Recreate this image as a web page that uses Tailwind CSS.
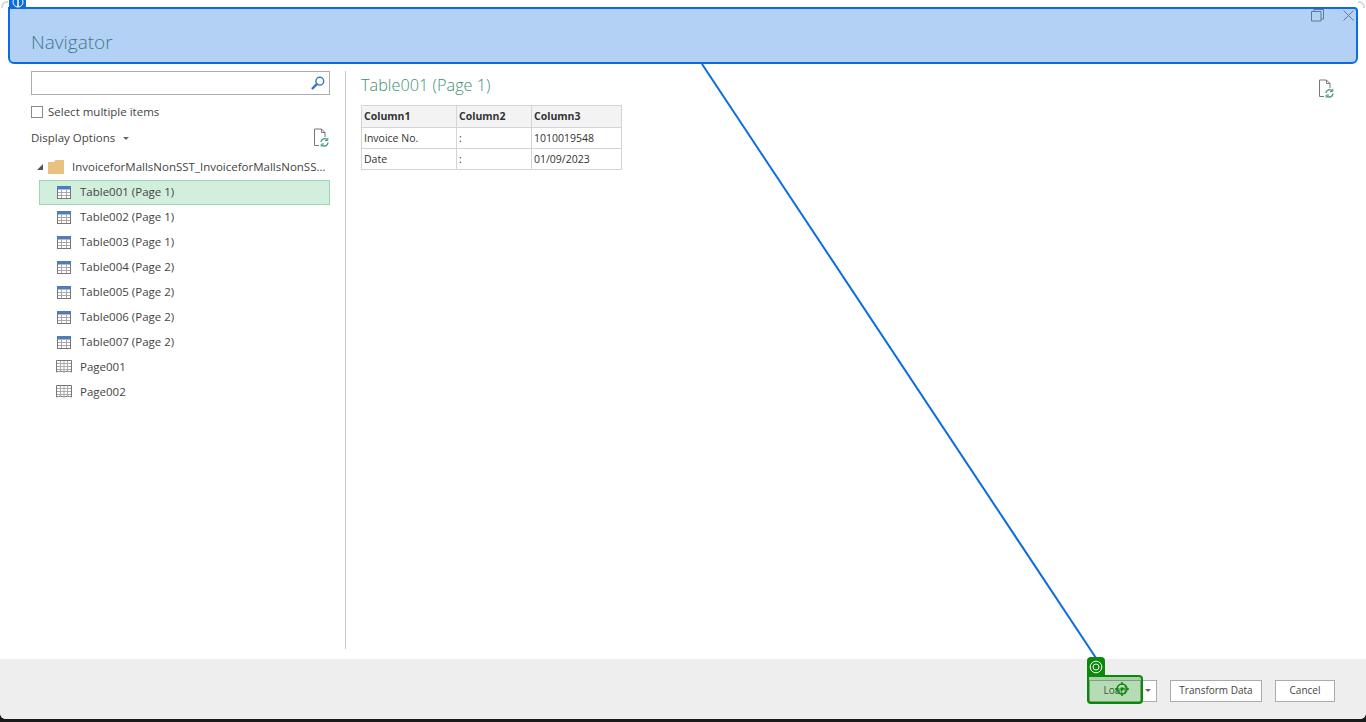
<!DOCTYPE html>
<html>
<head>
    <meta charset="UTF-8">
    <title>Navigator</title>
    <script src="https://cdn.jsdelivr.net/npm/@tailwindcss/browser@4"></script>
</head>
<body class="bg-[#1a1a1a] overflow-hidden">
<div class="relative w-[1366px] h-[722px] overflow-hidden font-['Open_Sans','Noto_Sans',sans-serif] text-[11.5px] text-[#444]">
    <div class="flex flex-col h-[719px] bg-white rounded-b-md overflow-hidden">
        <!-- main area -->
        <div class="flex h-[659px] pt-[71px] pb-[10px]">
            <div class="w-[346px] h-full border-r border-[#c8c8c8] pl-[31px] pr-[15px] shrink-0">
                <div class="flex items-center justify-end h-[24px] border border-[#ababab] pr-[3px]">
                    <svg width="16" height="16" viewBox="0 0 16 16" fill="none"><circle cx="9.8" cy="6.2" r="3.9" stroke="#3f7ab8" stroke-width="1.5"/><path d="M6.8 9.2 2.6 13.4" stroke="#3f7ab8" stroke-width="2.4" stroke-linecap="round"/></svg>
                </div>
                <label class="flex items-center gap-[5px] mt-[10px] h-[14px]">
                    <span class="w-[12px] h-[12px] border border-[#8a8a8a] bg-white"></span>
                    <span>Select multiple items</span>
                </label>
                <div class="flex items-center justify-between mt-[7px] h-[24px]">
                    <div class="flex items-center gap-[8px]"><span>Display Options</span><span class="w-0 h-0 border-x-[3px] border-x-transparent border-t-[3px] border-t-[#666]"></span></div>
                    <svg class="mr-[1px]" width="16" height="20" viewBox="0 0 16 20" fill="none"><path d="M6 17.5H1.5V1H8.5L12 4.5V9" stroke="#777" stroke-width="1"/><path d="M8.5 1V4.5H12" stroke="#777"/><path d="M8 14a3.6 3.6 0 0 1 6.2-2.2M15 14.5a3.6 3.6 0 0 1-6.2 2.4" stroke="#4a9a7c" stroke-width="1.4"/><path d="M14.8 9.8v2.8H12M8.2 18.8V16H11" stroke="#4a9a7c"/></svg>
                </div>
                <div class="flex items-center h-[26px] mt-[4px] pb-[1px] pl-[6px]">
                    <span class="w-0 h-0 border-l-[6px] border-l-transparent border-b-[6px] border-b-[#555] mr-[5px]"></span>
                    <svg width="16" height="14" viewBox="0 0 16 14"><path d="M0 2h6l1.5-2H16v14H0z" fill="#e8c27e"/></svg>
                    <span class="ml-[8px] whitespace-nowrap">InvoiceforMallsNonSST_InvoiceforMallsNonSS...</span>
                </div>
                <ul class="ml-[8px]" id="tree">
                    <li class="flex items-center h-[25px] pb-[1px] border border-[#9fd4b4] bg-[#d2eedd] pl-[17px]">
                        <svg width="14" height="13" viewBox="0 0 14 13"><rect x=".5" y=".5" width="13" height="12" fill="#fff" stroke="#777"/><rect width="14" height="3.5" fill="#4f7db5"/><path d="M1 6.5h12M1 9.5h12M4.5 3.500V12M9.500 3.500V12" stroke="#a8a8a8"/></svg>
                        <span class="ml-[9px]">Table001 (Page 1)</span>
                    </li>
                    <li class="flex items-center h-[25px] pb-[1px] pl-[18px]">
                        <svg width="14" height="13" viewBox="0 0 14 13"><rect x=".5" y=".5" width="13" height="12" fill="#fff" stroke="#777"/><rect width="14" height="3.5" fill="#4f7db5"/><path d="M1 6.5h12M1 9.5h12M4.5 3.500V12M9.500 3.500V12" stroke="#a8a8a8"/></svg>
                        <span class="ml-[9px]">Table002 (Page 1)</span>
                    </li>
                    <li class="flex items-center h-[25px] pb-[1px] pl-[18px]">
                        <svg width="14" height="13" viewBox="0 0 14 13"><rect x=".5" y=".5" width="13" height="12" fill="#fff" stroke="#777"/><rect width="14" height="3.5" fill="#4f7db5"/><path d="M1 6.5h12M1 9.5h12M4.5 3.500V12M9.500 3.500V12" stroke="#a8a8a8"/></svg>
                        <span class="ml-[9px]">Table003 (Page 1)</span>
                    </li>
                    <li class="flex items-center h-[25px] pb-[1px] pl-[18px]">
                        <svg width="14" height="13" viewBox="0 0 14 13"><rect x=".5" y=".5" width="13" height="12" fill="#fff" stroke="#777"/><rect width="14" height="3.5" fill="#4f7db5"/><path d="M1 6.5h12M1 9.5h12M4.5 3.500V12M9.500 3.500V12" stroke="#a8a8a8"/></svg>
                        <span class="ml-[9px]">Table004 (Page 2)</span>
                    </li>
                    <li class="flex items-center h-[25px] pb-[1px] pl-[18px]">
                        <svg width="14" height="13" viewBox="0 0 14 13"><rect x=".5" y=".5" width="13" height="12" fill="#fff" stroke="#777"/><rect width="14" height="3.5" fill="#4f7db5"/><path d="M1 6.5h12M1 9.5h12M4.5 3.500V12M9.500 3.500V12" stroke="#a8a8a8"/></svg>
                        <span class="ml-[9px]">Table005 (Page 2)</span>
                    </li>
                    <li class="flex items-center h-[25px] pb-[1px] pl-[18px]">
                        <svg width="14" height="13" viewBox="0 0 14 13"><rect x=".5" y=".5" width="13" height="12" fill="#fff" stroke="#777"/><rect width="14" height="3.5" fill="#4f7db5"/><path d="M1 6.5h12M1 9.5h12M4.5 3.500V12M9.500 3.500V12" stroke="#a8a8a8"/></svg>
                        <span class="ml-[9px]">Table006 (Page 2)</span>
                    </li>
                    <li class="flex items-center h-[25px] pb-[1px] pl-[18px]">
                        <svg width="14" height="13" viewBox="0 0 14 13"><rect x=".5" y=".5" width="13" height="12" fill="#fff" stroke="#777"/><rect width="14" height="3.5" fill="#4f7db5"/><path d="M1 6.5h12M1 9.5h12M4.5 3.500V12M9.500 3.500V12" stroke="#a8a8a8"/></svg>
                        <span class="ml-[9px]">Table007 (Page 2)</span>
                    </li>
                    <li class="flex items-center h-[25px] pb-[1px] pl-[17px]">
                        <svg width="16" height="14" viewBox="0 0 16 14" fill="none"><path d="M.5.5h15v11.500c-2.500-1-5-1-7.500 0-2.500-1-5-1-7.500 0z" fill="#fff" stroke="#777"/><path d="M1 3.500h14M1 6.500h14M1 9.500h14M4.500 1v10M8 1v10M11.500 1v10" stroke="#aaa"/></svg>
                        <span class="ml-[8px]">Page001</span>
                    </li>
                    <li class="flex items-center h-[25px] pb-[1px] pl-[17px]">
                        <svg width="16" height="14" viewBox="0 0 16 14" fill="none"><path d="M.5.5h15v11.500c-2.500-1-5-1-7.500 0-2.500-1-5-1-7.500 0z" fill="#fff" stroke="#777"/><path d="M1 3.500h14M1 6.500h14M1 9.500h14M4.500 1v10M8 1v10M11.500 1v10" stroke="#aaa"/></svg>
                        <span class="ml-[8px]">Page002</span>
                    </li>
                </ul>
            </div>
            <div class="flex-1 pl-[15px] pr-[32px]">
                <div class="flex justify-between">
                    <h2 class="text-[16.3px] leading-[28px] font-light text-[#3f8f6f]">Table001 (Page 1)</h2>
                    <svg class="mt-[8px]" width="16" height="20" viewBox="0 0 16 20" fill="none"><path d="M6 17.5H1.5V1H8.5L12 4.5V9" stroke="#777" stroke-width="1"/><path d="M8.5 1V4.5H12" stroke="#777"/><path d="M8 14a3.6 3.6 0 0 1 6.2-2.2M15 14.5a3.6 3.6 0 0 1-6.2 2.4" stroke="#4a9a7c" stroke-width="1.4"/><path d="M14.8 9.800v2.800H12M8.200 18.800V16H11" stroke="#4a9a7c"/></svg>
                </div>
                <table class="mt-[6px] w-[260px] table-fixed border-collapse text-[10.5px] text-[#333]">
                    <colgroup><col class="w-[95px]"><col class="w-[75px]"><col class="w-[90px]"></colgroup>
                    <thead>
                        <tr class="h-[22px] bg-[#f3f3f3] font-bold text-left">
                            <th class="border border-[#d4d4d4] pl-[2px]">Column1</th>
                            <th class="border border-[#d4d4d4] pl-[2px]">Column2</th>
                            <th class="border border-[#d4d4d4] pl-[2px]">Column3</th>
                        </tr>
                    </thead>
                    <tbody>
                        <tr class="h-[21px]">
                            <td class="border border-[#d4d4d4] pl-[2px] pt-[1px]">Invoice No.</td>
                            <td class="border border-[#d4d4d4] pl-[2px] pt-[1px]">:</td>
                            <td class="border border-[#d4d4d4] pl-[2px] pt-[1px]">1010019548</td>
                        </tr>
                        <tr class="h-[21px]">
                            <td class="border border-[#d4d4d4] pl-[2px] pt-[1px]">Date</td>
                            <td class="border border-[#d4d4d4] pl-[2px] pt-[1px]">:</td>
                            <td class="border border-[#d4d4d4] pl-[2px] pt-[1px]">01/09/2023</td>
                        </tr>
                    </tbody>
                </table>
            </div>
        </div>
        <!-- footer -->
        <div class="flex-1 flex items-center justify-end bg-[#eeeeee] pr-[31px] pt-[3px] text-[10px] text-[#444]">
            <button class="w-[52px] h-[22px] border border-[#ababab] bg-white">Load</button>
            <button class="flex items-center justify-center w-[16px] h-[22px] pr-[2px] border border-l-0 border-[#ababab] bg-white"><span class="w-0 h-0 border-x-[3px] border-x-transparent border-t-[3px] border-t-[#666]"></span></button>
            <button class="w-[92px] h-[22px] ml-[13px] border border-[#ababab] bg-white">Transform Data</button>
            <button class="w-[60px] h-[22px] ml-[13px] border border-[#ababab] bg-white">Cancel</button>
        </div>
    </div>

    <!-- window corners behind the bar -->
    <div class="absolute left-[1px] top-[1px] w-[7px] h-[7px] border-l-2 border-t-2 border-[#d8d8d8] rounded-tl-[6px]"></div>
    <div class="absolute right-[1px] top-[1px] w-[7px] h-[7px] border-r-2 border-t-2 border-[#d8d8d8] rounded-tr-[6px]"></div>

    <!-- highlighted title bar over the dialog -->
    <div class="absolute left-[8px] top-[7px] w-[1350px] h-[57px] border-2 border-[#0b6ce0] rounded-b-[6px] rounded-tr-[4px] bg-[#b3d1f5]">
        <span class="absolute left-[21px] top-[20px] text-[19px] leading-[26px] font-light text-[#3f7a8c]">Navigator</span>
        <svg class="absolute right-[32px] top-[0px]" width="13" height="13" viewBox="0 0 13 13" fill="none"><path d="M.5 2.500h9.500v9.500H.5zM3 2.500V.5h9.500V10H10" stroke="#64788f"/></svg>
        <svg class="absolute right-[1px] top-[0px]" width="13" height="13" viewBox="0 0 13 13" fill="none"><path d="M1.500 1.500l10 10M11.500 1.500l-10 10" stroke="#64788f"/></svg>
    </div>
    <div class="absolute left-[9px] top-0 w-[17px] h-[8px] bg-[#0b6ce0] flex justify-center overflow-hidden">
        <svg class="-mt-[4px]" width="12" height="12" viewBox="0 0 12 12" fill="none"><circle cx="6" cy="6" r="5" stroke="#fff"/><path d="M6 1v10" stroke="#fff" stroke-width="1.500"/></svg>
    </div>

    <!-- connector line -->
    <svg class="absolute left-0 top-0 pointer-events-none" width="1366" height="722" fill="none"><path d="M702 64 1096 658" stroke="#0b6ce0" stroke-width="2"/></svg>

    <!-- target marker over Load -->
    <div class="absolute left-[1087px] top-[657px] w-[18px] h-[20px] bg-[#0a8a0a] rounded-t-[4px] flex items-center justify-center">
        <svg width="14" height="14" viewBox="0 0 14 14" fill="none"><circle cx="7" cy="7" r="5.800" stroke="#fff" stroke-width="1"/><circle cx="7" cy="7" r="3" stroke="#fff" stroke-width="1"/></svg>
    </div>
    <div class="absolute left-[1087px] top-[675px] w-[56px] h-[29px] border-2 border-[#0a8a0a] rounded-[4px] rounded-tl-none bg-[#0a8a0a]/30"></div>
    <svg class="absolute left-[1114px] top-[681px]" width="16" height="16" viewBox="0 0 16 16" fill="none"><circle cx="8" cy="8" r="5" stroke="#0a8a0a" stroke-width="1.500"/><circle cx="8" cy="8" r="1.800" fill="#0a8a0a"/><path d="M8 1v3M8 12v3M1 8h3M12 8h3" stroke="#0a8a0a" stroke-width="1.500"/></svg>
</div>
</body>
</html>
